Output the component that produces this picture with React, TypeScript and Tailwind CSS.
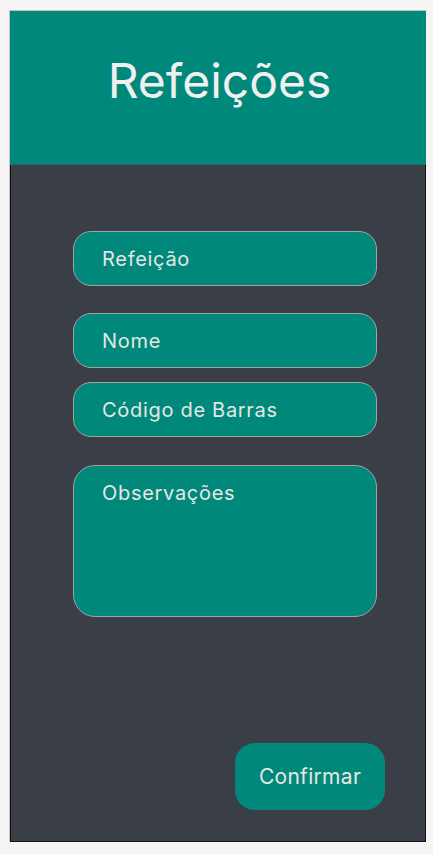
export default function App() {
  const font = { fontFamily: "Inter, 'Noto Sans', sans-serif" };
  const field = "rounded-[18px] border border-[#a3a3a3] bg-[#00897a] flex items-center pl-[28px] text-[20px] tracking-[0.7px] text-[#e6e6e6]";
  return (
    <div className="w-[433px] h-[854px] bg-[#f4f4f4] pt-[10px] pl-[9px]" style={font}>
      <div className="w-[417px] h-[832px] flex flex-col border-t border-l border-[#c4c4c4]">
        <div className="h-[154px] bg-[#00897a] border-b border-[#1f6e63] flex items-center justify-center">
          <h1 className="text-[48px] text-[#f0f0f0] leading-none mt-[-14px] ml-[3px]">Refeições</h1>
        </div>
        <div className="flex-1 bg-[#3a3e47] border-l border-r border-b border-[#111111] flex flex-col pl-[62px] pr-[48px] pt-[66px]">
          <div className={`h-[55px] ${field}`}>Refeição</div>
          <div className={`h-[55px] mt-[27px] ${field}`}>Nome</div>
          <div className={`h-[55px] mt-[14px] ${field}`}>Código de Barras</div>
          <div className="h-[152px] mt-[28px] rounded-[22px] border border-[#a3a3a3] bg-[#00897a] pl-[28px] pt-[12px] text-[20px] tracking-[0.7px] text-[#e6e6e6]">Observações</div>
          <div className="flex justify-end mt-[126px] mr-[-8px]">
            <button className="w-[150px] h-[67px] rounded-[20px] bg-[#00897a] text-[21px] tracking-[0.3px] text-[#e6e6e6]">Confirmar</button>
          </div>
        </div>
      </div>
    </div>
  );
}
